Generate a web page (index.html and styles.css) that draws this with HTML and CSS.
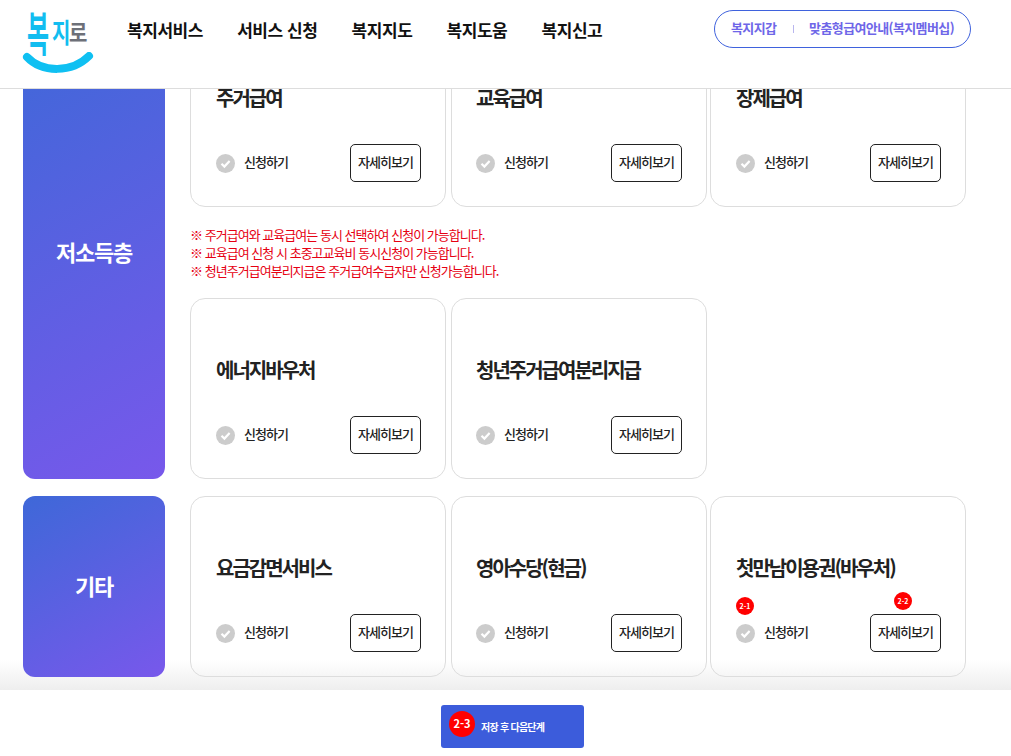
FILE: index.html
```html
<!DOCTYPE html>
<html lang="ko">
<head>
  <meta charset="UTF-8" />
  <title>복지로</title>
  <link rel="stylesheet" href="styles.css">
</head>
<body>
  <header class="site-header">
    <a class="logo" href="#">
      <span class="logo-bok">복</span>
      <span class="logo-ji">지</span>
      <span class="logo-ro">로</span>
      <svg class="logo-smile" width="72" height="24" viewBox="0 0 72 24"><path d="M5 5 C 20 21, 50 21, 67 4" fill="none" stroke="#0fc0f2" stroke-width="8" stroke-linecap="round"/></svg>
    </a>
    <nav class="main-nav">
      <a href="#">복지서비스</a>
      <a href="#">서비스 신청</a>
      <a href="#">복지지도</a>
      <a href="#">복지도움</a>
      <a href="#">복지신고</a>
    </nav>
    <div class="util-pill">
      <a href="#">복지지갑</a>
      <span class="util-sep"></span>
      <a href="#">맞춤형급여안내(복지멤버십)</a>
    </div>
  </header>

  <main class="content">
    <div class="content-inner">
      <section class="group">
        <div class="group-label">저소득층</div>
        <div class="group-body">
          <div class="card-grid">
            <div class="card">
              <h3>주거급여</h3>
              <div class="card-row">
                <label class="apply"><svg class="check" width="19" height="19" viewBox="0 0 19 19"><circle cx="9.5" cy="9.5" r="9.5" fill="#ccc"/><path d="M5.5 9.8 L8.4 12.6 L13.6 7" fill="none" stroke="#fff" stroke-width="2.2"/></svg><span class="apply-text">신청하기</span></label>
                <a class="more-btn" href="#">자세히보기</a>
              </div>
            </div>
            <div class="card">
              <h3>교육급여</h3>
              <div class="card-row">
                <label class="apply"><svg class="check" width="19" height="19" viewBox="0 0 19 19"><circle cx="9.5" cy="9.5" r="9.5" fill="#ccc"/><path d="M5.5 9.8 L8.4 12.6 L13.6 7" fill="none" stroke="#fff" stroke-width="2.2"/></svg><span class="apply-text">신청하기</span></label>
                <a class="more-btn" href="#">자세히보기</a>
              </div>
            </div>
            <div class="card">
              <h3>장제급여</h3>
              <div class="card-row">
                <label class="apply"><svg class="check" width="19" height="19" viewBox="0 0 19 19"><circle cx="9.5" cy="9.5" r="9.5" fill="#ccc"/><path d="M5.5 9.8 L8.4 12.6 L13.6 7" fill="none" stroke="#fff" stroke-width="2.2"/></svg><span class="apply-text">신청하기</span></label>
                <a class="more-btn" href="#">자세히보기</a>
              </div>
            </div>
          </div>
          <div class="notes">
            <p>※ 주거급여와 교육급여는 동시 선택하여 신청이 가능합니다.</p>
            <p>※ 교육급여 신청 시 초중고교육비 동시신청이 가능합니다.</p>
            <p>※ 청년주거급여분리지급은 주거급여수급자만 신청가능합니다.</p>
          </div>
          <div class="card-grid">
            <div class="card">
              <h3>에너지바우처</h3>
              <div class="card-row">
                <label class="apply"><svg class="check" width="19" height="19" viewBox="0 0 19 19"><circle cx="9.5" cy="9.5" r="9.5" fill="#ccc"/><path d="M5.5 9.8 L8.4 12.6 L13.6 7" fill="none" stroke="#fff" stroke-width="2.2"/></svg><span class="apply-text">신청하기</span></label>
                <a class="more-btn" href="#">자세히보기</a>
              </div>
            </div>
            <div class="card">
              <h3>청년주거급여분리지급</h3>
              <div class="card-row">
                <label class="apply"><svg class="check" width="19" height="19" viewBox="0 0 19 19"><circle cx="9.5" cy="9.5" r="9.5" fill="#ccc"/><path d="M5.5 9.8 L8.4 12.6 L13.6 7" fill="none" stroke="#fff" stroke-width="2.2"/></svg><span class="apply-text">신청하기</span></label>
                <a class="more-btn" href="#">자세히보기</a>
              </div>
            </div>
          </div>
        </div>
      </section>

      <section class="group">
        <div class="group-label">기타</div>
        <div class="group-body">
          <div class="card-grid">
            <div class="card">
              <h3>요금감면서비스</h3>
              <div class="card-row">
                <label class="apply"><svg class="check" width="19" height="19" viewBox="0 0 19 19"><circle cx="9.5" cy="9.5" r="9.5" fill="#ccc"/><path d="M5.5 9.8 L8.4 12.6 L13.6 7" fill="none" stroke="#fff" stroke-width="2.2"/></svg><span class="apply-text">신청하기</span></label>
                <a class="more-btn" href="#">자세히보기</a>
              </div>
            </div>
            <div class="card">
              <h3>영아수당(현금)</h3>
              <div class="card-row">
                <label class="apply"><svg class="check" width="19" height="19" viewBox="0 0 19 19"><circle cx="9.5" cy="9.5" r="9.5" fill="#ccc"/><path d="M5.5 9.8 L8.4 12.6 L13.6 7" fill="none" stroke="#fff" stroke-width="2.2"/></svg><span class="apply-text">신청하기</span></label>
                <a class="more-btn" href="#">자세히보기</a>
              </div>
            </div>
            <div class="card">
              <h3>첫만남이용권(바우처)</h3>
              <div class="card-row">
                <label class="apply"><span class="step-badge step-apply">2-1</span><svg class="check" width="19" height="19" viewBox="0 0 19 19"><circle cx="9.5" cy="9.5" r="9.5" fill="#ccc"/><path d="M5.5 9.8 L8.4 12.6 L13.6 7" fill="none" stroke="#fff" stroke-width="2.2"/></svg><span class="apply-text">신청하기</span></label>
                <a class="more-btn" href="#"><span class="step-badge step-more">2-2</span>자세히보기</a>
              </div>
            </div>
          </div>
        </div>
      </section>
    </div>
  </main>

  <footer class="bottom-bar">
    <a class="save-btn" href="#"><span class="save-badge">2-3</span>저장 후 다음단계</a>
  </footer>
</body>
</html>
```

FILE: styles.css
```css
html, body {
  height: 100%;
}

body {
  margin: 0;
  height: 756px;
  overflow: hidden;
  display: flex;
  flex-direction: column;
  background: #fff;
  color: #222;
  font-family: "Noto Sans CJK KR", "Noto Sans", sans-serif;
}

a {
  color: inherit;
  text-decoration: none;
}

.site-header {
  flex: none;
  height: 88px;
  display: flex;
  align-items: flex-start;
  background: #fff;
  border-bottom: 1px solid #ddd;
  position: relative;
  z-index: 2;
}

.logo {
  width: 72px;
  height: 76px;
  margin-left: 22px;
  position: relative;
  display: block;
}

.logo span {
  position: absolute;
  line-height: 1;
  font-weight: 700;
  transform-origin: top left;
}

.logo-bok {
  left: 5px;
  top: 8px;
  color: #12bdf0;
  font-size: 24px;
  font-weight: 500;
  transform: scaleY(1.95);
}

.logo-ji {
  left: 30px;
  top: 19px;
  color: #12bdf0;
  font-size: 20px;
  transform: scaleY(1.35);
}

.logo-ro {
  left: 47px;
  top: 21px;
  color: #6d7078;
  font-size: 20px;
  transform: scaleY(1.12);
}

.logo-smile {
  position: absolute;
  left: 0;
  top: 52px;
}

.main-nav {
  display: flex;
  gap: 34.2px;
  margin-left: 33px;
  height: 58px;
  align-items: center;
  font-size: 17px;
  font-weight: 700;
  letter-spacing: -0.45px;
  color: #111;
}

.util-pill {
  position: absolute;
  left: 714px;
  top: 10px;
  box-sizing: border-box;
  width: 257px;
  height: 38px;
  padding: 0 16px 3px;
  display: flex;
  align-items: center;
  justify-content: space-between;
  border: 1px solid #3f62dd;
  border-radius: 19px;
  color: #6e66e8;
  font-size: 13px;
  font-weight: 700;
  letter-spacing: -0.6px;
}

.util-sep {
  width: 1px;
  height: 8px;
  margin: 3px 0 0 1px;
  background: #b9b6ee;
}

.content {
  flex: 1;
  min-height: 0;
  overflow: hidden;
  background: linear-gradient(#fff calc(100% - 30px), #eee);
}

.content-inner {
  margin-top: -63px;
  padding: 0 45px 0 23px;
  display: flex;
  flex-direction: column;
  gap: 17px;
}

.group {
  display: flex;
  gap: 25px;
}

.group-label {
  flex: none;
  box-sizing: border-box;
  width: 142px;
  padding-bottom: 4px;
  display: flex;
  align-items: center;
  justify-content: center;
  border-radius: 12px;
  background: linear-gradient(150deg, #3e68d8, #7858eb);
  color: #fff;
  font-size: 22px;
  font-weight: 700;
  letter-spacing: -1.2px;
}

.group-body {
  flex: 1;
  min-width: 0;
}

.card-grid {
  display: flex;
}

.card {
  flex: 0 0 256px;
  box-sizing: border-box;
  height: 181px;
  padding: 57px 24px 24px 25px;
  border: 1px solid #ddd;
  border-radius: 15px;
}

.card:nth-child(2) {
  margin: 0 3px 0 5px;
  padding-left: 24px;
}

.card h3 {
  margin: 0 0 32px;
  height: 28px;
  font-size: 20px;
  line-height: 28px;
  font-weight: 700;
  letter-spacing: -2px;
  color: #222;
}

.card-row {
  display: flex;
  align-items: center;
  justify-content: space-between;
}

.apply {
  position: relative;
  display: flex;
  align-items: center;
  gap: 9px;
  font-size: 13px;
  font-weight: 500;
  letter-spacing: -1px;
  color: #222;
}

.apply-text {
  margin-bottom: 3px;
}

.more-btn {
  position: relative;
  box-sizing: border-box;
  width: 71px;
  height: 38px;
  padding-bottom: 3px;
  display: flex;
  align-items: center;
  justify-content: center;
  border: 1px solid #222;
  border-radius: 5px;
  background: #fff;
  font-size: 13px;
  font-weight: 500;
  letter-spacing: -1px;
  white-space: nowrap;
}

.notes {
  padding: 19px 0 18px;
  color: #e60012;
  font-size: 13px;
  line-height: 18px;
  letter-spacing: -0.97px;
}

.notes p {
  margin: 0;
}

.step-badge {
  position: absolute;
  width: 18px;
  height: 18px;
  border-radius: 50%;
  background: #f00;
  color: #fff;
  font-size: 7px;
  font-weight: 700;
  line-height: 18px;
  text-align: center;
  letter-spacing: 0;
}

.step-apply {
  left: 0;
  top: -25px;
}

.step-more {
  right: 28px;
  top: -23px;
}

.bottom-bar {
  flex: none;
  height: 66px;
  display: flex;
  justify-content: center;
  align-items: flex-start;
  background: #fff;
}

.save-btn {
  box-sizing: border-box;
  width: 143px;
  height: 43px;
  margin: 15px 0 0 14px;
  padding-left: 8px;
  display: flex;
  align-items: center;
  gap: 6px;
  border-radius: 3px;
  background: #3c5cdb;
  color: #fff;
  font-size: 10px;
  font-weight: 700;
  letter-spacing: -0.75px;
}

.save-badge {
  width: 26px;
  height: 26px;
  margin-top: -5px;
  border-radius: 50%;
  background: #f00;
  font-size: 11px;
  line-height: 24px;
  text-align: center;
  letter-spacing: 0;
}
```
